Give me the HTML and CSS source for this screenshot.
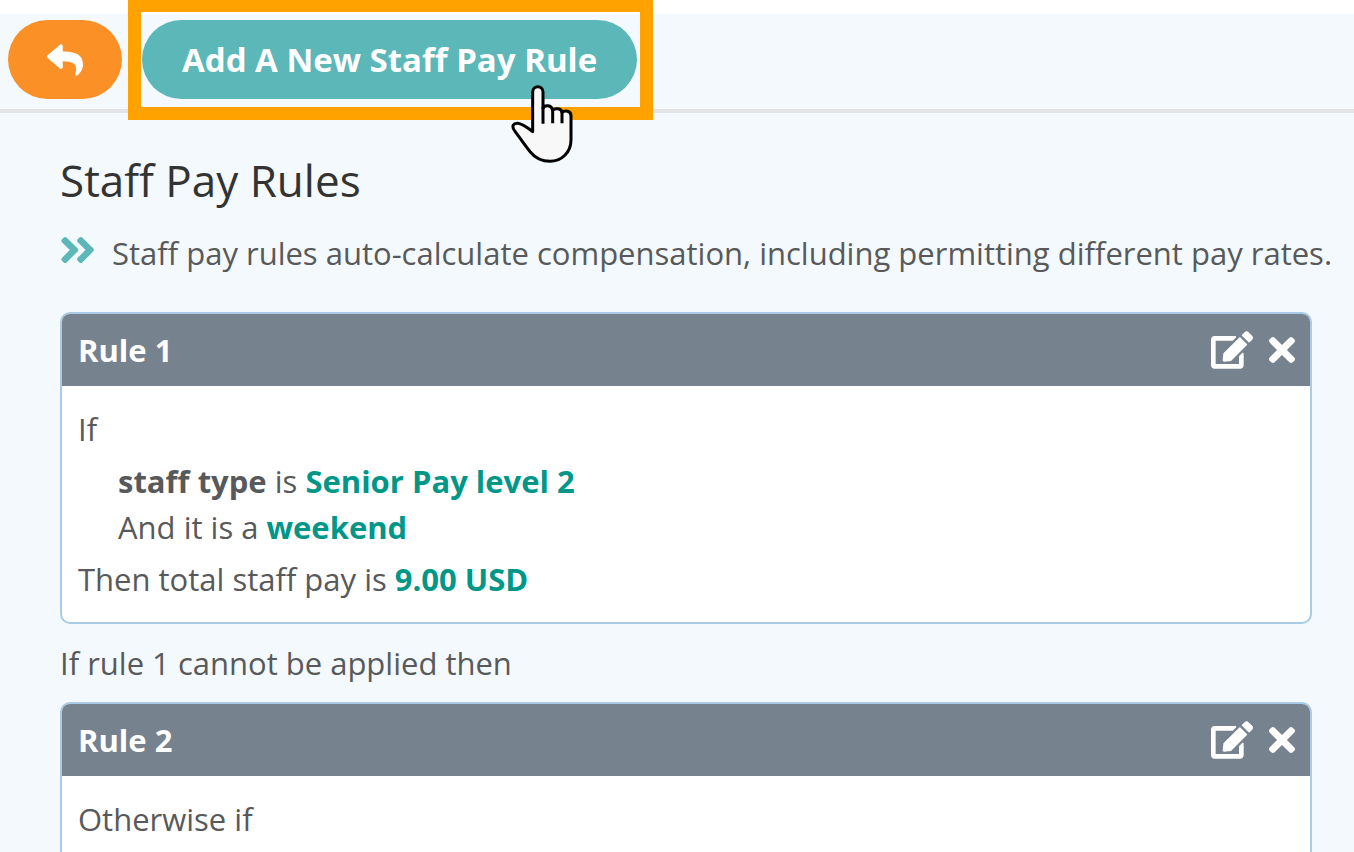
FILE: index.html
```html
<!DOCTYPE html>
<html lang="en">

<head>
    <meta charset="utf-8">
    <title>Staff Pay Rules</title>
    <link rel="stylesheet" href="styles.css">
</head>

<body>
    <!-- shared icons -->
    <svg class="sprite" aria-hidden="true">
        <symbol id="icon-edit" viewBox="0 0 576 512">
            <path d="M402.6 83.2l90.2 90.2c3.8 3.8 3.8 10 0 13.8L274.4 405.6l-92.8 10.3c-12.4 1.4-22.9-9.1-21.5-21.5l10.3-92.8L388.8 83.2c3.8-3.8 10-3.8 13.8 0zm162-22.9l-48.8-48.8c-15.2-15.2-39.9-15.2-55.2 0l-35.4 35.4c-3.8 3.8-3.8 10 0 13.8l90.2 90.2c3.8 3.8 10 3.8 13.8 0l35.4-35.4c15.2-15.3 15.2-40 0-55.2zM384 346.2V448H64V128h229.8c3.2 0 6.2-1.3 8.5-3.5l40-40c7.6-7.6 2.2-20.5-8.5-20.5H48C21.5 64 0 85.5 0 112v352c0 26.5 21.5 48 48 48h352c26.5 0 48-21.5 48-48V306.2c0-10.7-12.9-16-20.5-8.5l-40 40c-2.2 2.3-3.5 5.3-3.5 8.5z" />
        </symbol>
        <symbol id="icon-times" viewBox="0 80 352 352">
            <path d="M242.72 256l100.07-100.07c12.28-12.28 12.28-32.19 0-44.48l-22.24-22.24c-12.28-12.28-32.19-12.28-44.48 0L176 189.28 75.93 89.21c-12.28-12.28-32.19-12.28-44.48 0L9.21 111.45c-12.28 12.28-12.28 32.19 0 44.48L109.28 256 9.21 356.07c-12.28 12.28-12.28 32.19 0 44.48l22.24 22.24c12.28 12.28 32.2 12.28 44.48 0L176 322.72l100.07 100.07c12.28 12.28 32.2 12.28 44.48 0l22.24-22.24c12.28-12.28 12.28-32.19 0-44.48L242.72 256z" />
        </symbol>
    </svg>

    <header class="toolbar">
        <button type="button" class="btn btn-back" aria-label="Back">
            <svg class="icon-reply" viewBox="0 0 512 512">
                <path d="M8.309 189.836L184.313 37.851C199.719 24.546 224 35.347 224 56.015v80.053c160.629 1.839 288 34.032 288 186.258 0 61.441-39.581 122.309-83.333 154.132-13.653 9.931-33.111-2.533-28.077-18.631 45.344-145.012-21.507-183.51-176.59-185.742V360c0 20.7-24.3 31.453-39.687 18.164l-176.004-152c-11.071-9.562-11.086-26.753 0-36.328z" />
            </svg>
        </button>
        <div class="add-rule">
            <button type="button" class="btn btn-add">Add A New Staff Pay Rule</button>
            <span class="highlight"></span>
            <svg class="pointer" viewBox="66 256 189 234" aria-hidden="true">
                <path d="M131 396V278c0-22 31-22 31 0v48c5-11 26-11 29 6 7-8 26-6 28 6 8-7 27-5 27 10v72c0 38-28 65-63 65-27 0-46-12-59-28-18-22-32-44-46-62-13-17-3-25 8-24 14 1 28 12 45 25z" />
                <path d="M162 322v50M191 330v41M219 336v35" />
            </svg>
        </div>
    </header>

    <main class="content">
        <h1>Staff Pay Rules</h1>
        <p class="intro">
            <svg class="icon-angles" viewBox="8 96 416 320" aria-hidden="true">
                <path d="M224.3 273l-136 136c-9.4 9.4-24.6 9.4-33.9 0l-22.6-22.6c-9.4-9.4-9.4-24.6 0-33.9l96.4-96.4-96.4-96.4c-9.4-9.4-9.4-24.6 0-33.9L54.3 103c9.4-9.4 24.6-9.4 33.9 0l136 136c9.5 9.4 9.5 24.6.1 34zm192-34l-136-136c-9.4-9.4-24.6-9.4-33.9 0l-22.6 22.6c-9.4 9.4-9.4 24.6 0 33.9l96.4 96.4-96.4 96.4c-9.4 9.4-9.4 24.6 0 33.9l22.6 22.6c9.4 9.4 24.6 9.4 33.9 0l136-136c9.4-9.2 9.4-24.4 0-33.8z" />
            </svg>
            <span>Staff pay rules auto-calculate compensation, including permitting different pay rates.</span>
        </p>

        <div class="rules">
            <section class="rule">
                <div class="rule-header">
                    <h2>Rule 1</h2>
                    <button type="button" class="rule-action" aria-label="Edit rule 1">
                        <svg class="icon-edit"><use href="#icon-edit" /></svg>
                    </button>
                    <button type="button" class="rule-action" aria-label="Delete rule 1">
                        <svg class="icon-times"><use href="#icon-times" /></svg>
                    </button>
                </div>
                <div class="rule-body">
                    <p>If</p>
                    <div class="conditions">
                        <p><b>staff type</b> is <b class="value">Senior Pay level 2</b></p>
                        <p>And it is a <b class="value">weekend</b></p>
                    </div>
                    <p>Then total staff pay is <b class="value">9.00 USD</b></p>
                </div>
            </section>

            <p class="between">If rule 1 cannot be applied then</p>

            <section class="rule">
                <div class="rule-header">
                    <h2>Rule 2</h2>
                    <button type="button" class="rule-action" aria-label="Edit rule 2">
                        <svg class="icon-edit"><use href="#icon-edit" /></svg>
                    </button>
                    <button type="button" class="rule-action" aria-label="Delete rule 2">
                        <svg class="icon-times"><use href="#icon-times" /></svg>
                    </button>
                </div>
                <div class="rule-body">
                    <p>Otherwise if</p>
                </div>
            </section>
        </div>
    </main>
</body>

</html>
```
FILE: styles.css
```css
* {
    box-sizing: border-box;
}

body {
    height: 100vh;
    margin: 0;
    overflow: hidden;
    background-color: #f3f9fc;
    color: #58595b;
    font-family: 'Open Sans', sans-serif;
    font-size: 31px;
    line-height: 46px;
}

h1,
h2,
p {
    margin: 0;
}

button {
    border: none;
    font-family: inherit;
    cursor: pointer;
}

svg {
    display: block;
    fill: currentColor;
}

.sprite {
    display: none;
}

/* toolbar */
.toolbar {
    display: flex;
    gap: 20px;
    padding: 6px 8px 10px;
    border-top: 14px solid white;
    border-bottom: 4px solid #e2e3e4;
}

.btn {
    display: flex;
    align-items: center;
    justify-content: center;
    height: 79px;
    padding: 0 40px;
    border-radius: 40px;
    color: white;
    font-size: 33px;
    font-weight: 700;
    white-space: nowrap;
}

.btn-back {
    width: 114px;
    padding: 0;
    background-color: #fb9026;
}

.btn-add {
    background-color: #5bb7b8;
}

.icon-reply {
    width: 36px;
    height: 36px;
}

.add-rule {
    position: relative;
}

/* frame around the add button */
.highlight {
    position: absolute;
    top: -21px;
    right: -16px;
    bottom: -21px;
    left: -14px;
    border: 13px solid #ffa200;
    pointer-events: none;
}

.pointer {
    position: absolute;
    right: 63px;
    bottom: -64px;
    width: 63px;
    height: 78px;
    fill: #f8f8f8;
    stroke: black;
    stroke-width: 9px;
    stroke-linejoin: round;
    pointer-events: none;
}

/* content */
.content {
    padding: 35px 12px 0 60px;
}

h1 {
    margin-bottom: 18px;
    color: #333;
    font-size: 44px;
    font-weight: 400;
    line-height: 64px;
}

.intro {
    display: flex;
    align-items: flex-start;
    gap: 18px;
    margin-bottom: 36px;
}

.icon-angles {
    flex-shrink: 0;
    width: 34px;
    height: 40px;
    color: #5bb7b8;
}

.rules {
    margin-right: 30px;
}

.rule {
    overflow: hidden;
    border: 2px solid #a9cbe5;
    border-radius: 10px;
    background-color: white;
}

.rule-header {
    display: flex;
    align-items: center;
    gap: 16px;
    padding: 13px 15px 13px 16px;
    background-color: #76828e;
    color: white;
}

h2 {
    flex: 1;
    font-size: 31px;
    font-weight: 700;
    line-height: 46px;
}

.rule-action {
    padding: 0;
    background: none;
    color: inherit;
}

.icon-edit {
    width: 42px;
    height: 38px;
}

.icon-times {
    width: 26px;
    height: 26px;
}

.rule-body {
    padding: 20px 16px;
}

.conditions {
    margin: 6px 0;
    padding-left: 40px;
}

.value {
    color: #009688;
}

.between {
    padding: 16px 0;
}
```
